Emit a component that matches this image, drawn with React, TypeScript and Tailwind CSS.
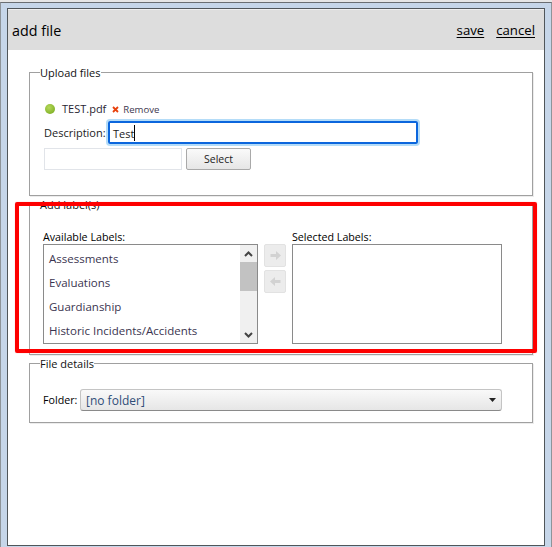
const font = { fontFamily: '"Open Sans", "Noto Sans", sans-serif' };

function Legend({ children }: { children: string }) {
  return <legend className="ml-[10px] text-[11px] leading-[15px] text-[#111]">{children}</legend>;
}

const labels = ["Assessments", "Evaluations", "Guardianship", "Historic Incidents/Accidents"];

export default function App() {
  return (
    <div style={font} className="relative h-[547px] w-[552px] overflow-hidden bg-[#e6e6e6] pt-[2px] text-[11px] text-[#222]">
      <div className="h-[545px] w-[552px] border-x border-t border-x-[#8e9499] border-t-[#6a6e72] bg-[#c6d6e9] pl-[6px] pr-[6px] pt-[5px]">
        <div className="flex h-[538px] w-[538px] flex-col border border-[#50565a] bg-white">
          <div className="flex h-[41px] items-center justify-between border-t border-[#efefef] bg-[#dddddd] pl-1 pr-[9px] text-[14.3px] text-black">
            <span className="pt-[1px]">add file</span>
            <span className="flex gap-3 pt-[1px] text-[13.2px]">
              <span className="underline underline-offset-2">save</span>
              <span className="underline underline-offset-2">cancel</span>
            </span>
          </div>
          <div className="flex flex-col pl-[21px] pt-[15px]">
            <fieldset className="mb-[1px] h-[131px] w-[504px] border border-[#a0a0a0] shadow-[1px_1px_0_#ececec]">
              <Legend>Upload files</Legend>
              <div className="pl-[14px]">
                <div className="mt-[21px] flex h-[16px] items-center">
                  <span className="ml-[1px] h-[10px] w-[10px] rounded-full bg-[radial-gradient(circle_at_40%_35%,#b5d85a,#86b52c_70%,#6f9a22)]" />
                  <span className="ml-[7px] text-[11px] text-[#2a1f33]">TEST.pdf</span>
                  <svg className="ml-[6px]" width="7" height="7" viewBox="0 0 7 7">
                    <path d="M1 1l5 5M6 1l-5 5" stroke="#e8410c" strokeWidth="1.800" />
                  </svg>
                  <span className="ml-[4px] pt-[2px] text-[9.6px] text-[#403850]">Remove</span>
                </div>
                <div className="mt-[4px] flex h-[23px] items-center">
                  <span className="w-[64px] pt-[1px] text-[11px] text-[#222]">Description:</span>
                  <div className="flex h-[23px] w-[310px] items-center rounded-[2px] border-2 border-[#0b66dd] pl-[3px] shadow-[0_0_0_2px_#b4dcf8]">
                    <span className="border-r border-black pt-[1px] text-[11px] leading-[15px]">Test</span>
                  </div>
                </div>
                <div className="mt-[4px] flex h-[22px]">
                  <div className="h-[22px] w-[138px] border border-[#e1e4e9] bg-white" />
                  <button className="ml-[4px] h-[22px] w-[65px] rounded-[2px] border border-[#a9a9a9] bg-gradient-to-b from-[#fafafa] to-[#e6e6e6] pt-[1px] text-[10.500px] text-[#222]">
                    Select
                  </button>
                </div>
              </div>
            </fieldset>
            <fieldset className="mb-[1px] h-[158px] w-[504px] border border-[#a0a0a0] shadow-[1px_1px_0_#ececec]">
              <Legend>Add label(s)</Legend>
              <div className="mt-[17px] flex pl-[13px]">
                <div className="w-[215px]">
                  <div className="h-[15px] pt-[1px] text-[10.700px] leading-[15px] text-black">Available Labels:</div>
                  <div className="flex h-[100px] border border-[#8a8a8a]">
                    <div className="flex-1 pl-[5px] text-[11.500px] text-[#3b3550]">
                      {labels.map((l) => (
                        <div key={l} className="flex h-[24px] items-center whitespace-nowrap first:mt-[2px]">
                          {l}
                        </div>
                      ))}
                    </div>
                    <div className="flex w-[17px] flex-col bg-[#f0f0f0]">
                      <div className="flex h-[17px] items-center justify-center">
                        <svg width="9" height="6" viewBox="0 0 9 6"><path d="M1 5l3.500-3.500L8 5" fill="none" stroke="#444" strokeWidth="2" /></svg>
                      </div>
                      <div className="h-[29px] bg-[#c2c2c2]" />
                      <div className="flex-1" />
                      <div className="flex h-[17px] items-center justify-center">
                        <svg width="9" height="6" viewBox="0 0 9 6"><path d="M1 1l3.500 3.500L8 1" fill="none" stroke="#444" strokeWidth="2" /></svg>
                      </div>
                    </div>
                  </div>
                </div>
                <div className="ml-[6px] flex w-[22px] flex-col gap-[3px] pt-[15px]">
                  <div className="flex h-[23px] items-center justify-center rounded-[2px] border border-[#e2e2e2] bg-[#ececec]">
                    <svg width="11" height="9" viewBox="0 0 11 9"><path d="M0.500 3h5.500V0l5 4.500-5 4.500V6H0.500z" fill="#d2d2d2" /></svg>
                  </div>
                  <div className="flex h-[23px] items-center justify-center rounded-[2px] border border-[#e2e2e2] bg-[#ececec]">
                    <svg width="11" height="9" viewBox="0 0 11 9"><path d="M10.500 3H5V0L0 4.500 5 9V6h5.500z" fill="#d2d2d2" /></svg>
                  </div>
                </div>
                <div className="ml-[6px] w-[210px]">
                  <div className="h-[15px] pt-[1px] text-[10.700px] leading-[15px] text-black">Selected Labels:</div>
                  <div className="h-[100px] border border-[#8a8a8a]" />
                </div>
              </div>
            </fieldset>
            <fieldset className="h-[67px] w-[504px] border border-[#a0a0a0] shadow-[1px_1px_0_#ececec]">
              <Legend>File details</Legend>
              <div className="mt-[18px] flex items-center pl-[13px]">
                <span className="w-[37px] text-[10.700px] text-black">Folder:</span>
                <div className="flex h-[22px] w-[422px] items-center justify-between rounded-[3px] border border-[#c4c4c4] border-b-[#8a8a8a] bg-gradient-to-b from-[#f9f9f9] to-[#e6e6e6] pl-[5px] pr-[5px] text-[12px] text-[#2f4d78]">
                  <span className="pt-[1px]">[no folder]</span>
                  <svg width="7" height="4" viewBox="0 0 7 4"><path d="M0 0h7L3.500 4z" fill="#222" /></svg>
                </div>
              </div>
            </fieldset>
          </div>
        </div>
      </div>
      <div className="absolute left-[15px] top-[202px] h-[151px] w-[522px] rounded-[2px] border-[4px] border-[#fe0000] shadow-[0_0_1px_#ff8080]" />
    </div>
  );
}
